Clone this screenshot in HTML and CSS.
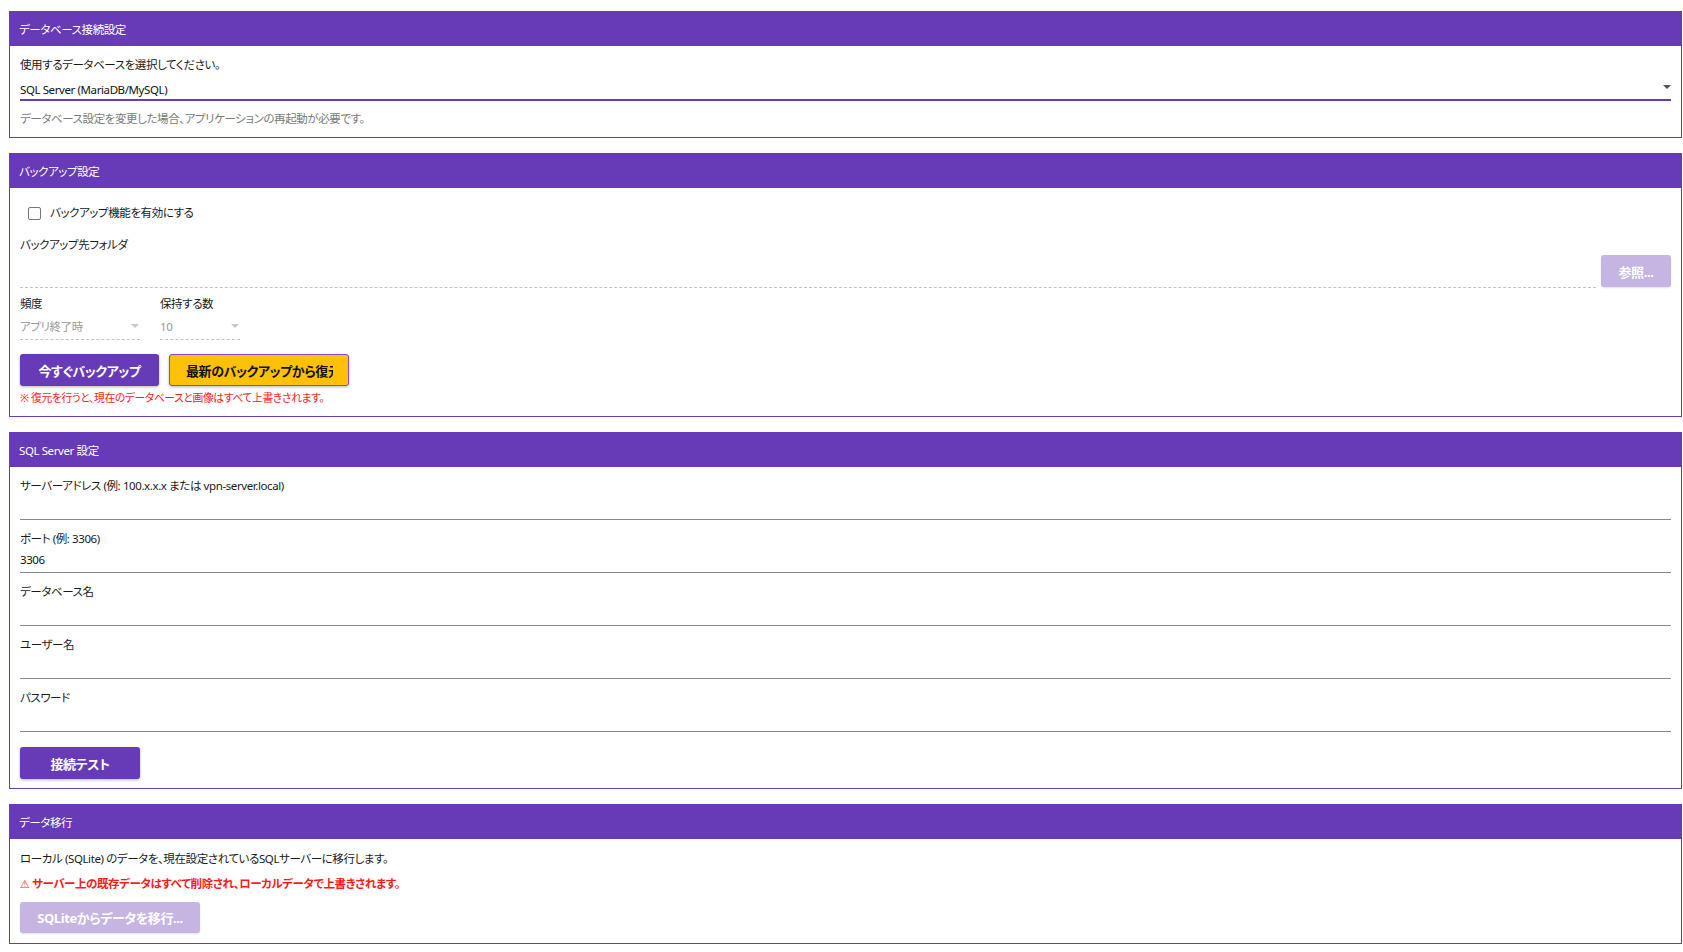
FILE: index.html
```html
<!DOCTYPE html>
<html lang="ja">
<head>
<meta charset="utf-8">
<title>設定</title>
<link rel="stylesheet" href="styles.css">
</head>
<body>
<div class="page">

  <section class="card card-db">
    <header class="card-head">データベース接続設定</header>
    <div class="card-body">
      <div class="db-label">使用するデータベースを選択してください。</div>
      <div class="db-select">
        <span>SQL Server (MariaDB/MySQL)</span>
        <span class="arrow"></span>
      </div>
      <div class="hint">データベース設定を変更した場合、アプリケーションの再起動が必要です。</div>
    </div>
  </section>

  <section class="card card-backup">
    <header class="card-head">バックアップ設定</header>
    <div class="card-body">
      <label class="check-row">
        <span class="checkbox"></span>
        <span>バックアップ機能を有効にする</span>
      </label>
      <div class="field-label folder-label">バックアップ先フォルダ</div>
      <div class="folder-row">
        <div class="dashed-input"></div>
        <button class="btn btn-disabled btn-browse">参照...</button>
      </div>
      <div class="select-row">
        <div class="mini-field freq">
          <div class="field-label">頻度</div>
          <div class="mini-select"><span>アプリ終了時</span><span class="arrow light"></span></div>
        </div>
        <div class="mini-field keep">
          <div class="field-label">保持する数</div>
          <div class="mini-select"><span>10</span><span class="arrow light"></span></div>
        </div>
      </div>
      <div class="btn-row">
        <button class="btn btn-primary btn-now">今すぐバックアップ</button>
        <button class="btn btn-amber btn-restore"><span class="clip">最新のバックアップから復元</span></button>
      </div>
      <div class="warn-small">※ 復元を行うと、現在のデータベースと画像はすべて上書きされます。</div>
    </div>
  </section>

  <section class="card card-sql">
    <header class="card-head">SQL Server 設定</header>
    <div class="card-body">
      <div class="field">
        <div class="field-label">サーバーアドレス (例: 100.x.x.x または vpn-server.local)</div>
        <div class="line-input"></div>
      </div>
      <div class="field">
        <div class="field-label">ポート (例: 3306)</div>
        <div class="line-input">3306</div>
      </div>
      <div class="field">
        <div class="field-label">データベース名</div>
        <div class="line-input"></div>
      </div>
      <div class="field">
        <div class="field-label">ユーザー名</div>
        <div class="line-input"></div>
      </div>
      <div class="field">
        <div class="field-label">パスワード</div>
        <div class="line-input"></div>
      </div>
      <button class="btn btn-primary btn-test">接続テスト</button>
    </div>
  </section>

  <section class="card card-migrate">
    <header class="card-head">データ移行</header>
    <div class="card-body">
      <div class="mig-text">ローカル (SQLite) のデータを、現在設定されているSQLサーバーに移行します。</div>
      <div class="mig-warn"><span class="warn-icon">⚠</span> サーバー上の既存データはすべて削除され、ローカルデータで上書きされます。</div>
      <button class="btn btn-disabled btn-migrate">SQLiteからデータを移行...</button>
    </div>
  </section>

</div>
</body>
</html>
```

FILE: styles.css
```css
html, body {
  margin: 0;
  padding: 0;
  background: #ffffff;
}

body {
  font-family: "Noto Sans", "Noto Sans CJK JP", sans-serif;
  font-feature-settings: "palt";
  font-size: 11.5px;
  letter-spacing: -0.4px;
  line-height: 16px;
  color: #1a1a1a;
}

.page {
  padding: 11px 1px 0 9px;
  display: flex;
  flex-direction: column;
  gap: 15px;
}

.card {
  border: 1px solid #673ab7;
  border-top: 0;
  background: #fff;
}

.card-head {
  background: #673ab7;
  color: #fff;
  height: 35px;
  line-height: 37px;
  margin: 0 -1px;
  padding-left: 10px;
}

.card-body {
  padding: 0 10px;
}

/* Card 1 */
.card-db .card-body {
  padding-top: 11px;
  padding-bottom: 10px;
}
.db-select {
  height: 26px;
  border-bottom: 2px solid #673ab7;
  display: flex;
  align-items: flex-end;
  justify-content: space-between;
  color: #111;
}
.db-select span:first-child {
  margin-bottom: 1px;
}
.hint {
  margin-top: 10px;
  color: #7a7a7a;
}

.arrow {
  width: 0;
  height: 0;
  border-left: 4px solid transparent;
  border-right: 4px solid transparent;
  border-top: 4px solid #555;
}
.db-select .arrow {
  margin-bottom: 10px;
}
.arrow.light {
  border-top-color: #c8c8c8;
  margin-right: 1px;
}

/* Card 2 */
.card-backup .card-body {
  padding-top: 15px;
  padding-bottom: 10px;
}
.check-row {
  display: flex;
  align-items: center;
  height: 20px;
  padding-left: 8px;
  gap: 9px;
}
.checkbox {
  width: 11px;
  height: 11px;
  border: 1.5px solid #777;
  border-radius: 2px;
  display: inline-block;
}
.folder-label {
  margin-top: 14px;
}
.folder-row {
  display: flex;
  align-items: flex-end;
  gap: 5px;
  height: 35px;
}
.dashed-input {
  flex: 1;
  height: 0;
  border-bottom: 1px dashed #c4c4c4;
}
.btn-browse {
  width: 70px;
  height: 32px;
  margin-bottom: 1px;
}
.select-row {
  display: flex;
  gap: 20px;
  margin-top: 8px;
}
.mini-field.freq { width: 120px; }
.mini-field.keep { width: 80px; }
.mini-select {
  height: 27px;
  border-bottom: 1px dashed #c4c4c4;
  display: flex;
  align-items: center;
  justify-content: space-between;
  color: #9a9a9a;
}
.mini-select span:first-child {
  margin-top: 2px;
}
.btn-row {
  display: flex;
  gap: 10px;
  margin-top: 14px;
}
.warn-small {
  margin-top: 4px;
  color: #ff1a1a;
  font-size: 10.8px;
}

/* Buttons */
.btn {
  font-family: "Noto Sans", "Noto Sans CJK JP", sans-serif;
  font-feature-settings: "palt";
  letter-spacing: -0.4px;
  font-weight: 700;
  font-size: 13px;
  border: 0;
  border-radius: 3px;
  padding: 0;
  cursor: pointer;
  box-shadow: 0 1px 3px rgba(0, 0, 0, 0.3);
}
.btn-primary {
  background: #673ab7;
  color: #fff;
}
.btn-disabled {
  background: #c6b4e3;
  color: #fff;
  box-shadow: 0 1px 2px rgba(0, 0, 0, 0.12);
}
.btn-amber {
  background: #ffc107;
  color: #111;
  border: 1px solid #7a52c0;
}
.btn-now {
  width: 139px;
  height: 32px;
}
.btn-restore {
  width: 180px;
  height: 32px;
  padding: 0 15px 0 16px;
  text-align: left;
}
.btn-restore .clip {
  display: block;
  overflow: hidden;
  white-space: nowrap;
}
.btn-test {
  width: 120px;
  height: 32px;
  margin-top: 15px;
  margin-bottom: 9px;
}

/* Card 3 */
.field-label {
  height: 16px;
}
.field {
  padding-top: 11px;
}
.line-input {
  height: 25px;
  border-bottom: 1px solid #8a8a8a;
  display: flex;
  align-items: center;
  color: #111;
}

/* Card 4 */
.card-migrate .card-body {
  padding-top: 12px;
  padding-bottom: 10px;
}
.mig-warn {
  margin-top: 9px;
  color: #ff1a1a;
  font-weight: 700;
}
.warn-icon {
  font-family: "DejaVu Sans", sans-serif;
  font-weight: 400;
  font-size: 11px;
}
.btn-migrate {
  width: 180px;
  height: 31px;
  margin-top: 9px;
  display: block;
}
```
